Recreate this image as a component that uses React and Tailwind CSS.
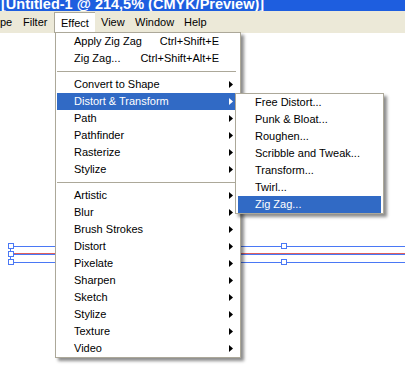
import React from "react";

const font = { fontFamily: '"Liberation Sans", Arial, sans-serif' };

function Arrow({ white }) {
  return (
    <svg width="4" height="7" viewBox="0 0 4 7" className="shrink-0">
      <polygon points="0,0 4,3.5 0,7" fill={white ? "#ffffff" : "#000000"} />
    </svg>
  );
}

function Item({ label, shortcut, arrow, active }) {
  return (
    <div
      className={`h-[17px] flex items-center pl-[17px] pr-[3px] ${
        active ? "bg-[#316AC5] text-white" : "text-black"
      }`}
    >
      <span className="flex-1 whitespace-nowrap">{label}</span>
      {shortcut && <span className="whitespace-nowrap mr-[14px]">{shortcut}</span>}
      {arrow && <Arrow white={active} />}
    </div>
  );
}

function Sep() {
  return (
    <div className="h-[9px] flex items-center">
      <div className="h-px w-full bg-[#ACA899]" />
    </div>
  );
}

export default function App() {
  return (
    <div
      className="relative w-[405px] h-[375px] bg-white overflow-hidden text-[11px] leading-[13px]"
      style={font}
    >
      {/* title bar */}
      <div className="h-[11px] bg-[#1E5EDF] overflow-hidden flex items-end">
        <div className="text-white font-bold text-[14.5px] leading-[15px] mb-[-1px] whitespace-nowrap pl-[1px]">
          [Untitled-1 @ 214,5% (CMYK/Preview)]
        </div>
      </div>
      {/* menu bar */}
      <div className="h-[22px] bg-[#ECE9D8] flex items-stretch">
        <div className="ml-[-6px] w-[23px] pl-[6px] flex items-center">pe</div>
        <div className="w-[37px] pl-[6px] flex items-center">Filter</div>
        <div className="w-[41px] pl-[6px] mt-[1px] flex items-center bg-white border-l border-t border-[#ACA899]">
          Effect
        </div>
        <div className="w-[34px] pl-[6px] flex items-center">View</div>
        <div className="w-[49px] pl-[6px] flex items-center">Window</div>
        <div className="w-[33px] pl-[6px] flex items-center">Help</div>
      </div>

      {/* canvas */}
      <svg
        className="absolute left-0 top-[240px]"
        width="405"
        height="30"
        viewBox="0 0 405 30"
      >
        <line x1="13" y1="6.5" x2="405" y2="6.5" stroke="#4A78F5" strokeWidth="1" />
        <line x1="13" y1="13.5" x2="405" y2="13.5" stroke="#E0605A" strokeWidth="1.2" />
        <line x1="13" y1="14.5" x2="405" y2="14.5" stroke="#4A78F5" strokeWidth="1" />
        <line x1="13" y1="22.5" x2="405" y2="22.5" stroke="#4A78F5" strokeWidth="1" />
        <rect x="8.5" y="3.5" width="5" height="5" fill="white" stroke="#4A78F5" />
        <rect x="8.5" y="11.5" width="5" height="5" fill="white" stroke="#4A78F5" />
        <rect x="8.5" y="19.5" width="5" height="5" fill="white" stroke="#4A78F5" />
        <line x1="10.5" y1="8.5" x2="10.5" y2="11.5" stroke="#4A78F5" />
        <line x1="10.5" y1="16.5" x2="10.5" y2="19.5" stroke="#4A78F5" />
        <rect x="281.5" y="3.5" width="5" height="5" fill="white" stroke="#4A78F5" />
        <rect x="281.5" y="19.5" width="5" height="5" fill="white" stroke="#4A78F5" />
      </svg>

      {/* Effect menu */}
      <div className="absolute left-[55px] top-[32px] w-[186px] bg-white border border-[#ACA899] px-[1px] pr-[4px] shadow-[3px_3px_3px_rgba(0,0,0,0.45)]">
        <Item label="Apply Zig Zag" shortcut="Ctrl+Shift+E" />
        <Item label="Zig Zag..." shortcut="Ctrl+Shift+Alt+E" />
        <Sep />
        <Item label="Convert to Shape" arrow />
        <Item label="Distort & Transform" arrow active />
        <Item label="Path" arrow />
        <Item label="Pathfinder" arrow />
        <Item label="Rasterize" arrow />
        <Item label="Stylize" arrow />
        <Sep />
        <Item label="Artistic" arrow />
        <Item label="Blur" arrow />
        <Item label="Brush Strokes" arrow />
        <Item label="Distort" arrow />
        <Item label="Pixelate" arrow />
        <Item label="Sharpen" arrow />
        <Item label="Sketch" arrow />
        <Item label="Stylize" arrow />
        <Item label="Texture" arrow />
        <Item label="Video" arrow />
      </div>

      {/* Submenu */}
      <div className="absolute left-[235px] top-[93px] w-[149px] bg-white border border-[#ACA899] pl-[2px] pr-[2px] shadow-[3px_3px_3px_rgba(0,0,0,0.45)]">
        <Item label="Free Distort..." />
        <Item label="Punk & Bloat..." />
        <Item label="Roughen..." />
        <Item label="Scribble and Tweak..." />
        <Item label="Transform..." />
        <Item label="Twirl..." />
        <Item label="Zig Zag..." active />
      </div>
    </div>
  );
}
